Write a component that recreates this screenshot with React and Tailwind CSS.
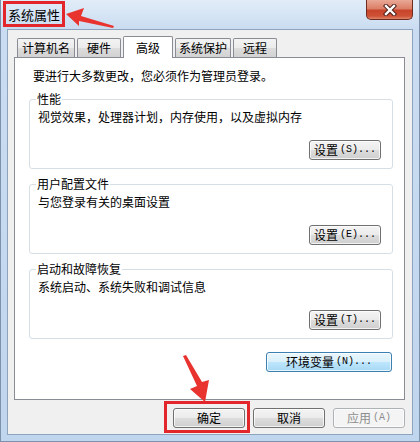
import React from "react";

const cjk = "font-['Noto_Sans_CJK_SC','Microsoft_YaHei',sans-serif]";

const Key = ({ k, dots = true }) => (
  <span className="font-['Liberation_Mono',monospace] text-[10px] ml-[2px]">
    ({k}){dots ? "..." : ""}
  </span>
);

const WinButton = ({ children, variant = "normal", className = "" }) => {
  const styles = {
    normal:
      "border-[#707070] bg-[linear-gradient(#f4f4f4_0%,#ebebeb_50%,#dddddd_50%,#cfcfcf_100%)] text-black",
    focus:
      "border-[#3c7fb1] bg-[linear-gradient(#eaf6fd_0%,#d9f0fc_50%,#bee6fd_50%,#a7d9f5_100%)] text-black",
    disabled: "border-[#adb2b5] bg-[#f4f4f4] text-[#8d8d8d]",
  };
  return (
    <button
      type="button"
      className={`h-[20px] flex items-center justify-center rounded-[3px] border shadow-[inset_0_0_0_1px_rgba(255,255,255,0.75)] text-[12px] leading-none ${styles[variant]} ${className}`}
    >
      {children}
    </button>
  );
};

const Tab = ({ label, active, width }) =>
  active ? (
    <div
      className={`${width} h-[22px] flex items-start justify-center pt-[3px] bg-white border border-b-0 border-[#898c95] rounded-t-[2px] text-[12px] leading-[16px]`}
    >
      {label}
    </div>
  ) : (
    <div
      className={`${width} h-[19px] mb-px flex items-center justify-center border border-b-0 border-[#898c95] rounded-t-[2px] bg-[linear-gradient(#f3f3f3_0%,#ebebeb_50%,#dddddd_50%,#d2d2d2_100%)] text-[12px] leading-[16px]`}
    >
      {label}
    </div>
  );

const Group = ({ title, text, keyName }) => (
  <fieldset className="border border-[#d5dfe5] rounded-[3px] pl-[6px] pr-[11px] pb-[8px] flex flex-col">
    <legend className="px-[1px] text-[12px] leading-[16px]">{title}</legend>
    <p className="mt-[2px] ml-[2px] text-[12px] leading-[16px]">{text}</p>
    <WinButton className="mt-[15px] self-end w-[72px]">
      设置<Key k={keyName} />
    </WinButton>
  </fieldset>
);

const App = () => {
  return (
    <div
      className={`w-[420px] h-[442px] relative overflow-hidden flex flex-col border-x border-b border-[#7d91aa] bg-[linear-gradient(#e1ecf8,#cadcf1_30px,#c0d6ee)] text-black ${cjk}`}
    >
      {/* title bar */}
      <div className="h-[29px] flex justify-between">
        <span className="pl-[7px] self-center text-[13px] leading-[18px]">系统属性</span>
        <div className="w-[47px] h-[20px] mr-[6px] flex items-center justify-center rounded-b-[5px] border border-t-0 border-[#6e2b22] bg-[linear-gradient(#e9a996_0%,#dc7f67_45%,#c8442b_55%,#cf5236_85%,#dd866a_100%)]">
          <svg width="14" height="12" viewBox="0 0 14 12">
            <path d="M3 2 L11 10 M11 2 L3 10" stroke="#4b1f19" strokeWidth="4.4" strokeLinecap="square" />
            <path d="M3 2 L11 10 M11 2 L3 10" stroke="#ffffff" strokeWidth="2.4" strokeLinecap="square" />
          </svg>
        </div>
      </div>

      {/* client area */}
      <div className="flex-1 mx-[6px] mb-[6px] border border-[#8ea4be] bg-[#f0f0f0] pl-[6px] pr-[7px] flex flex-col">
        <div className="mt-[6px] h-[22px] -mb-px relative z-10 flex items-end gap-[2px] pl-[3px]">
          <Tab label="计算机名" width="w-[58px]" />
          <Tab label="硬件" width="w-[44px]" />
          <Tab label="高级" width="w-[50px]" active />
          <Tab label="系统保护" width="w-[56px]" />
          <Tab label="远程" width="w-[44px]" />
        </div>

        <div className="h-[343px] bg-white border border-[#898c95] pt-[10px] pl-[14px] pr-[11px] flex flex-col">
          <p className="ml-[4px] text-[12px] leading-[16px]">
            要进行大多数更改，您必须作为管理员登录。
          </p>
          <div className="mt-[7px] flex flex-col gap-[7px]">
            <Group title="性能" text="视觉效果，处理器计划，内存使用，以及虚拟内存" keyName="S" />
            <Group title="用户配置文件" text="与您登录有关的桌面设置" keyName="E" />
            <Group title="启动和故障恢复" text="系统启动、系统失败和调试信息" keyName="T" />
          </div>
          <WinButton variant="focus" className="mt-[13px] self-end mr-[1px] w-[126px]">
            环境变量<Key k="N" />
          </WinButton>
        </div>

        <div className="mt-[8px] flex justify-end gap-[8px]">
          <WinButton className="w-[72px]">确定</WinButton>
          <WinButton className="w-[72px]">取消</WinButton>
          <WinButton variant="disabled" className="w-[72px]">
            应用<Key k="A" dots={false} />
          </WinButton>
        </div>
      </div>

      {/* annotations */}
      <div className="absolute left-[2px] top-[1px] w-[62px] h-[26px] border-[3px] border-[#e3262b]" />
      <div className="absolute left-[163px] top-[401px] w-[86px] h-[32px] border-[3px] border-[#e3262b]" />
      <svg className="absolute left-0 top-0 pointer-events-none" width="420" height="442" viewBox="0 0 420 442">
        <polygon points="65,14 83,8 80,16 113,26 112,28 78,21 78,26" fill="#e8332f" />
        <polygon points="182,356 185,355 201,382 208,380 204,402 189,389 196,386" fill="#e8332f" />
      </svg>
    </div>
  );
};

export default App;
